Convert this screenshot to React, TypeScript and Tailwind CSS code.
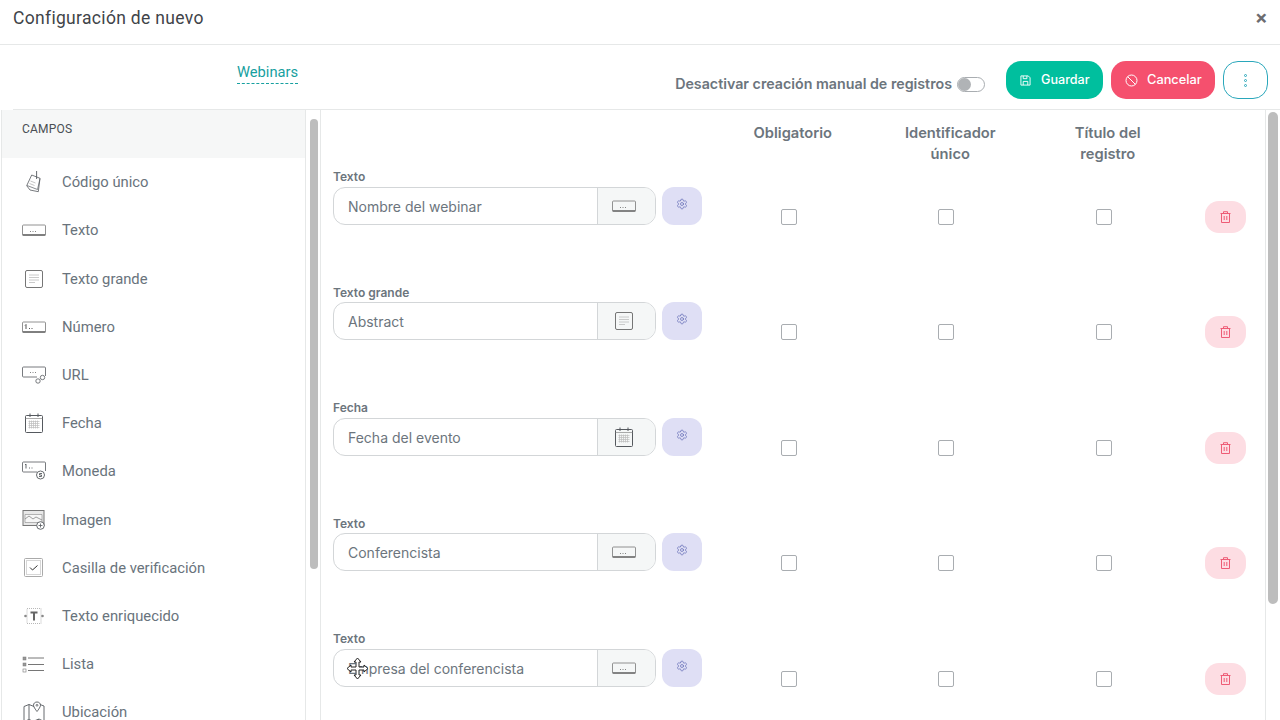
import React from 'react'
import { Settings } from 'lucide-react'

const ink = '#55595e'

function Svg({ w = 24, h = 24, children }: { w?: number; h?: number; children: React.ReactNode }) {
    return (
        <svg width={w} height={h} viewBox={`0 0 ${w} ${h}`} fill="none" stroke={ink} strokeWidth="1" className="shrink-0">
            {children}
        </svg>
    )
}

const TagIcon = () => (
    <Svg>
        <path d="M9.7 5 18 8.300 16.300 21.700 8 20 4.700 15.700Z" strokeWidth="0.8" />
        <path d="M5 15.500 15.500 19.500 18 8.500" strokeWidth="0.7" />
        <path d="M14.600 1V9" strokeWidth="0.9" />
        <path d="M8.500 11l5 2M7.500 13.500l5 2" stroke="#aaa" strokeWidth="0.7" />
    </Svg>
)
const InputIcon = ({ mark = '...' }: { mark?: string }) => (
    <Svg h={12}>
        <rect x="0.5" y="1" width="23" height="10" rx="1" stroke="#777" strokeWidth="0.8" />
        <path d="M0.500 11h23" stroke="#444" strokeWidth="1.100" />
        {mark === '...' ? (
            <path d="M8 7.500h1M10.500 7.500h1M13 7.500h1" stroke="#777" strokeWidth="0.9" />
        ) : (
            <path d="M4 3.500v4.500M3 4.500 4 3.500M7 7.500h1M9.500 7.500h1" stroke="#444" strokeWidth="0.9" />
        )}
    </Svg>
)
const LinesIcon = () => (
    <Svg h={20}>
        <rect x="3.500" y="1.500" width="17" height="17" rx="1.500" stroke="#666" strokeWidth="0.9" />
        <path d="M7 6h10M7 8.500h10M7 11h10M7 13.500h6" stroke="#c4c4c4" strokeWidth="0.9" />
    </Svg>
)
const UrlIcon = () => (
    <Svg h={20}>
        <path d="M15 12H1.500a1 1 0 0 1-1-1V3a1 1 0 0 1 1-1h21a1 1 0 0 1 1 1v8" strokeWidth="0.8" />
        <path d="M8 7.500h1M10.500 7.500h1M13 7.500h1" stroke="#777" strokeWidth="0.9" />
        <circle cx="16" cy="16" r="2.200" strokeWidth="0.8" />
        <circle cx="20.500" cy="12.500" r="2.200" strokeWidth="0.8" />
    </Svg>
)
const CalendarIcon = () => (
    <Svg h={20}>
        <rect x="3.500" y="2.500" width="17" height="17" rx="1" strokeWidth="1" />
        <path d="M3.500 5.500h17" stroke="#888" strokeWidth="0.7" />
        <path d="M8 0.500v3.500M16 0.500v3.500" strokeWidth="1" />
        <path d="M6.500 8.500h11M6.500 10.500h11M6.500 12.500h11M6.500 14.500h11M7.500 7.500v8M9.500 7.500v8M11.500 7.500v8M13.500 7.500v8M15.500 7.500v8" stroke="#bcbcbc" strokeWidth="0.7" />
    </Svg>
)
const MoneyIcon = () => (
    <Svg h={20}>
        <path d="M15 11H1.500a1 1 0 0 1-1-1V2a1 1 0 0 1 1-1h21a1 1 0 0 1 1 1v8" strokeWidth="0.8" />
        <path d="M4 3v4.500M3 4 4 3M7 7h1M9.500 7h1" strokeWidth="0.9" />
        <circle cx="18.500" cy="14" r="4" fill="#fff" strokeWidth="0.9" />
        <path d="M20 12.500h-2.500v1.500h2v1.500H17" strokeWidth="0.9" />
    </Svg>
)
const ImageIcon = () => (
    <Svg h={22}>
        <rect x="1" y="1.500" width="21" height="15" stroke="#777" strokeWidth="1" fill="#e8e8e8" />
        <path d="M3 5.500h17v8H3Z" fill="#f6f6f6" stroke="#888" strokeWidth="0.6" />
        <path d="M3 10l4-3 4 3 3-2 6 3" stroke="#777" strokeWidth="0.7" />
        <circle cx="18.500" cy="16.500" r="3.800" fill="#fff" strokeWidth="0.9" />
        <path d="M18.500 14.500v4M16.500 16.500h4" strokeWidth="0.8" />
    </Svg>
)
const CheckIcon = () => (
    <Svg h={22}>
        <rect x="2.500" y="1.500" width="18" height="18" rx="1" stroke="#aaa" strokeWidth="1" />
        <rect x="4.500" y="3.500" width="14" height="14" stroke="#777" strokeWidth="0.6" strokeDasharray="1 1" />
        <path d="M8 10.500l2.500 2.500 5-4.500" stroke="#333" strokeWidth="1" />
    </Svg>
)
const RichIcon = () => (
    <Svg h={18}>
        <rect x="5" y="1.500" width="14" height="15" stroke="#888" strokeWidth="0.6" strokeDasharray="1 1" />
        <path d="M8.500 5.500h7M12 5.500v8" strokeWidth="2" stroke="#666" />
        <circle cx="3.500" cy="9" r="1.300" fill="#888" stroke="none" />
        <circle cx="20.500" cy="9" r="1.300" fill="#888" stroke="none" />
    </Svg>
)
const ListIcon = () => (
    <Svg h={18}>
        <rect x="1" y="2" width="3" height="3" fill="#999" stroke="#777" strokeWidth="0.5" />
        <rect x="1" y="8" width="3" height="3" fill="#999" stroke="#777" strokeWidth="0.5" />
        <rect x="1" y="14" width="3" height="3" stroke="#777" strokeWidth="0.6" />
        <path d="M6 3h16M6 9.500h16M6 15.500h16" stroke="#666" strokeWidth="0.9" />
    </Svg>
)
const MapIcon = () => (
    <Svg h={22}>
        <path d="M2 5.500 7 3.500v15l-5 2ZM7 3.500l5 2M12 20l5-2 5 2.500V5l-4-1.500M7 18.500l5 2 5-2" strokeWidth="0.9" />
        <path d="M15 1c-2 0-3.500 1.300-3.500 3.200 0 2 3.500 6.300 3.500 6.300s3.500-4.300 3.500-6.300C18.500 2.300 17 1 15 1Z" fill="#fff" strokeWidth="0.9" />
        <circle cx="15" cy="4.300" r="0.900" strokeWidth="0.8" />
    </Svg>
)

const Trash = () => (
    <svg width="11" height="12" viewBox="0 0 11 12" fill="none" stroke="#ee5c76" strokeWidth="1">
        <path d="M0.500 2.500h10M3.500 2.500V0.700h4v1.800M1.500 2.500v9h8v-9M4.200 5v4M6.800 5v4" />
    </svg>
)

const sideItems: { label: string; icon: React.ReactNode }[] = [
    { label: 'Código único', icon: <TagIcon /> },
    { label: 'Texto', icon: <InputIcon /> },
    { label: 'Texto grande', icon: <LinesIcon /> },
    { label: 'Número', icon: <InputIcon mark="1" /> },
    { label: 'URL', icon: <UrlIcon /> },
    { label: 'Fecha', icon: <CalendarIcon /> },
    { label: 'Moneda', icon: <MoneyIcon /> },
    { label: 'Imagen', icon: <ImageIcon /> },
    { label: 'Casilla de verificación', icon: <CheckIcon /> },
    { label: 'Texto enriquecido', icon: <RichIcon /> },
    { label: 'Lista', icon: <ListIcon /> },
    { label: 'Ubicación', icon: <MapIcon /> },
]

const fields: { type: string; name: string; icon: React.ReactNode }[] = [
    { type: 'Texto', name: 'Nombre del webinar', icon: <InputIcon /> },
    { type: 'Texto grande', name: 'Abstract', icon: <LinesIcon /> },
    { type: 'Fecha', name: 'Fecha del evento', icon: <CalendarIcon /> },
    { type: 'Texto', name: 'Conferencista', icon: <InputIcon /> },
    { type: 'Texto', name: 'Empresa del conferencista', icon: <InputIcon /> },
]

function Box() {
    return <div className="w-4 h-4 border border-[#a9adb1] rounded-[2px] bg-white" />
}

export default function App() {
    return (
        <div className="relative w-[1280px] h-[720px] overflow-hidden bg-white flex flex-col font-['Inter',sans-serif] text-[#6c757d]">
            {/* Header */}
            <div className="h-[45px] shrink-0 border-b border-[#e6e8e8] flex items-start justify-between pl-[13px] pr-[13px]">
                <h1 className="font-['Roboto',sans-serif] text-[17.5px] leading-[20px] mt-[8px] tracking-[0.32px] text-[#3f4449]">
                    Configuración de nuevo
                </h1>
                <span className="font-['Roboto',sans-serif] text-[#6c6c70] text-[21px] font-bold leading-[20px] mt-[8px]">×</span>
            </div>

            {/* Toolbar */}
            <div className="h-[65px] shrink-0 ml-[13px] border-b border-[#e6e8e8] flex items-start pl-[224px] pr-[12px]">
                <span className="mt-[17px] font-['Roboto',sans-serif] text-[14.7px] leading-[20px] text-[#17a0a0] border-b border-dashed border-[#17a0a0] pb-[1px]">
                    Webinars
                </span>
                <div className="ml-auto flex items-start">
                    <span className="mt-[29px] text-[14.25px] leading-[20px] font-semibold text-[#6c757d]">
                        Desactivar creación manual de registros
                    </span>
                    <div className="mt-[32px] ml-[5px] w-[28px] h-[15px] rounded-full border border-[#a9adb1] bg-white flex items-center">
                        <div className="w-[13px] h-[13px] rounded-full bg-[#b0b3b6]" />
                    </div>
                    <button className="mt-[16px] ml-[21px] pl-[14px] w-[97px] h-[38px] rounded-[15px] bg-[#00bf9e] text-white text-[12.6px] font-medium flex items-center gap-[10px]">
                        <svg width="11" height="11" viewBox="0 0 12 12" fill="none" stroke="#fff" strokeWidth="1">
                            <path d="M1 1h8l2 2v8H1ZM3.500 1v3h4V1M3.500 11V7h5v4" />
                        </svg>
                        Guardar
                    </button>
                    <button className="mt-[16px] ml-[8px] pl-[14px] w-[104px] h-[38px] rounded-[15px] bg-[#f5506e] text-white text-[12.8px] font-medium flex items-center gap-[9px]">
                        <svg width="13" height="13" viewBox="0 0 13 13" fill="none" stroke="#fff" strokeWidth="1">
                            <circle cx="6.500" cy="6.500" r="5.500" />
                            <path d="M2.600 2.600l7.800 7.800" />
                        </svg>
                        Cancelar
                    </button>
                    <button className="mt-[16px] ml-[8px] w-[45px] h-[38px] rounded-[15px] border border-[#2aa7bb] bg-white flex flex-col items-center justify-center gap-[2px]">
                        <span className="w-[3px] h-[3px] rounded-full border border-[#2aa7bb]" />
                        <span className="w-[3px] h-[3px] rounded-full border border-[#2aa7bb]" />
                        <span className="w-[3px] h-[3px] rounded-full border border-[#2aa7bb]" />
                    </button>
                </div>
            </div>

            <div className="flex flex-1 min-h-0">
                {/* Fields sidebar */}
                <div className="ml-[1px] w-[305px] shrink-0 border-l border-r border-[#e6e8e8] overflow-hidden">
                    <div className="h-[48px] bg-[#f6f7f7] pl-[20px] pt-[11px] font-['Roboto',sans-serif] text-[12px] leading-[16px] tracking-[0.2px] text-[#4a4f54]">
                        CAMPOS
                    </div>
                    <div className="pt-[0.2px]">
                        {sideItems.map((item) => (
                            <div key={item.label} className="h-[48.2px] flex items-center pl-[20px]">
                                <div className="w-[24px] flex justify-center">{item.icon}</div>
                                <span className="ml-[16px] font-['Roboto',sans-serif] text-[14.8px] text-[#69737c]">
                                    {item.label}
                                </span>
                            </div>
                        ))}
                    </div>
                </div>

                {/* Sidebar scrollbar */}
                <div className="w-[15px] shrink-0 border-r border-[#e6e8e8] pl-[4px] pt-[9px]">
                    <div className="w-[8px] h-[450px] rounded-[4px] bg-[#bdbdbd]" />
                </div>

                {/* Field rows */}
                <div className="w-[944px] shrink-0 overflow-hidden">
                    <div className="grid grid-cols-[381px_157.5px_157.5px_157.5px_90px] h-[66px] pl-[12px] text-[14.7px] leading-[21px] font-semibold text-[#6c757d]">
                        <div />
                        <div className="text-center pt-[13px]">Obligatorio</div>
                        <div className="text-center pt-[13px]">Identificador<br />único</div>
                        <div className="text-center pt-[13px]">Título del<br />registro</div>
                    </div>
                    {fields.map((f) => (
                        <div key={f.name} className="h-[115.45px] grid grid-cols-[381px_157.5px_157.5px_157.5px_90px] pl-[12px]">
                            <div>
                                <div className="text-[12px] leading-[16px] font-semibold text-[#6c757d] h-[11px] -mt-[6.8px] pb-[6.8px] box-content">{f.type}</div>
                                <div className="flex">
                                    <div className="w-[323px] h-[38px] rounded-[12px] border border-[#d3d6d8] flex overflow-hidden">
                                        <div className="flex-1 pl-[14px] text-[14px] leading-[37.2px] text-[#6c757d]">{f.name}</div>
                                        <div className="w-[58px] bg-[#f5f7f7] border-l border-[#d3d6d8] flex items-center justify-center pr-[5px]">{f.icon}</div>
                                    </div>
                                    <div className="ml-[6px] w-[40px] h-[38px] rounded-[12px] bg-[#dfdff5] flex justify-center pt-[11px]">
                                        <Settings size={12} strokeWidth={1.5} className="text-[#6a72b8]" />
                                    </div>
                                </div>
                            </div>
                            <div className="flex justify-center pt-[33px]"><div className="-translate-x-[4px]"><Box /></div></div>
                            <div className="flex justify-center pt-[33px]"><div className="-translate-x-[4px]"><Box /></div></div>
                            <div className="flex justify-center pt-[33px]"><div className="-translate-x-[4px]"><Box /></div></div>
                            <div className="pt-[25px] pl-[18px]">
                                <div className="w-[41px] h-[32px] rounded-[14px] bg-[#fddde3] flex items-center justify-center"><Trash /></div>
                            </div>
                        </div>
                    ))}
                </div>

                {/* Main scrollbar */}
                <div className="flex-1 border-l border-[#e6e8e8] pl-[2px] pt-[2px]">
                    <div className="w-[10px] h-[492px] rounded-[5px] bg-[#bdbdbd]" />
                </div>
            </div>

            {/* Move cursor over the last field */}
            <svg className="absolute left-[346px] top-[657px]" width="23" height="23" viewBox="0 0 23 23" fill="#fff" stroke="#222" strokeWidth="1">
                <path d="M11.500 1 15 5h-2v5h5V8l4 3.500-4 3.500v-2h-5v5h2l-3.500 4-3.500-4h2v-5H5v2l-4-3.500L5 8v2h5V5H8Z" strokeLinejoin="round" />
            </svg>
        </div>
    )
}
